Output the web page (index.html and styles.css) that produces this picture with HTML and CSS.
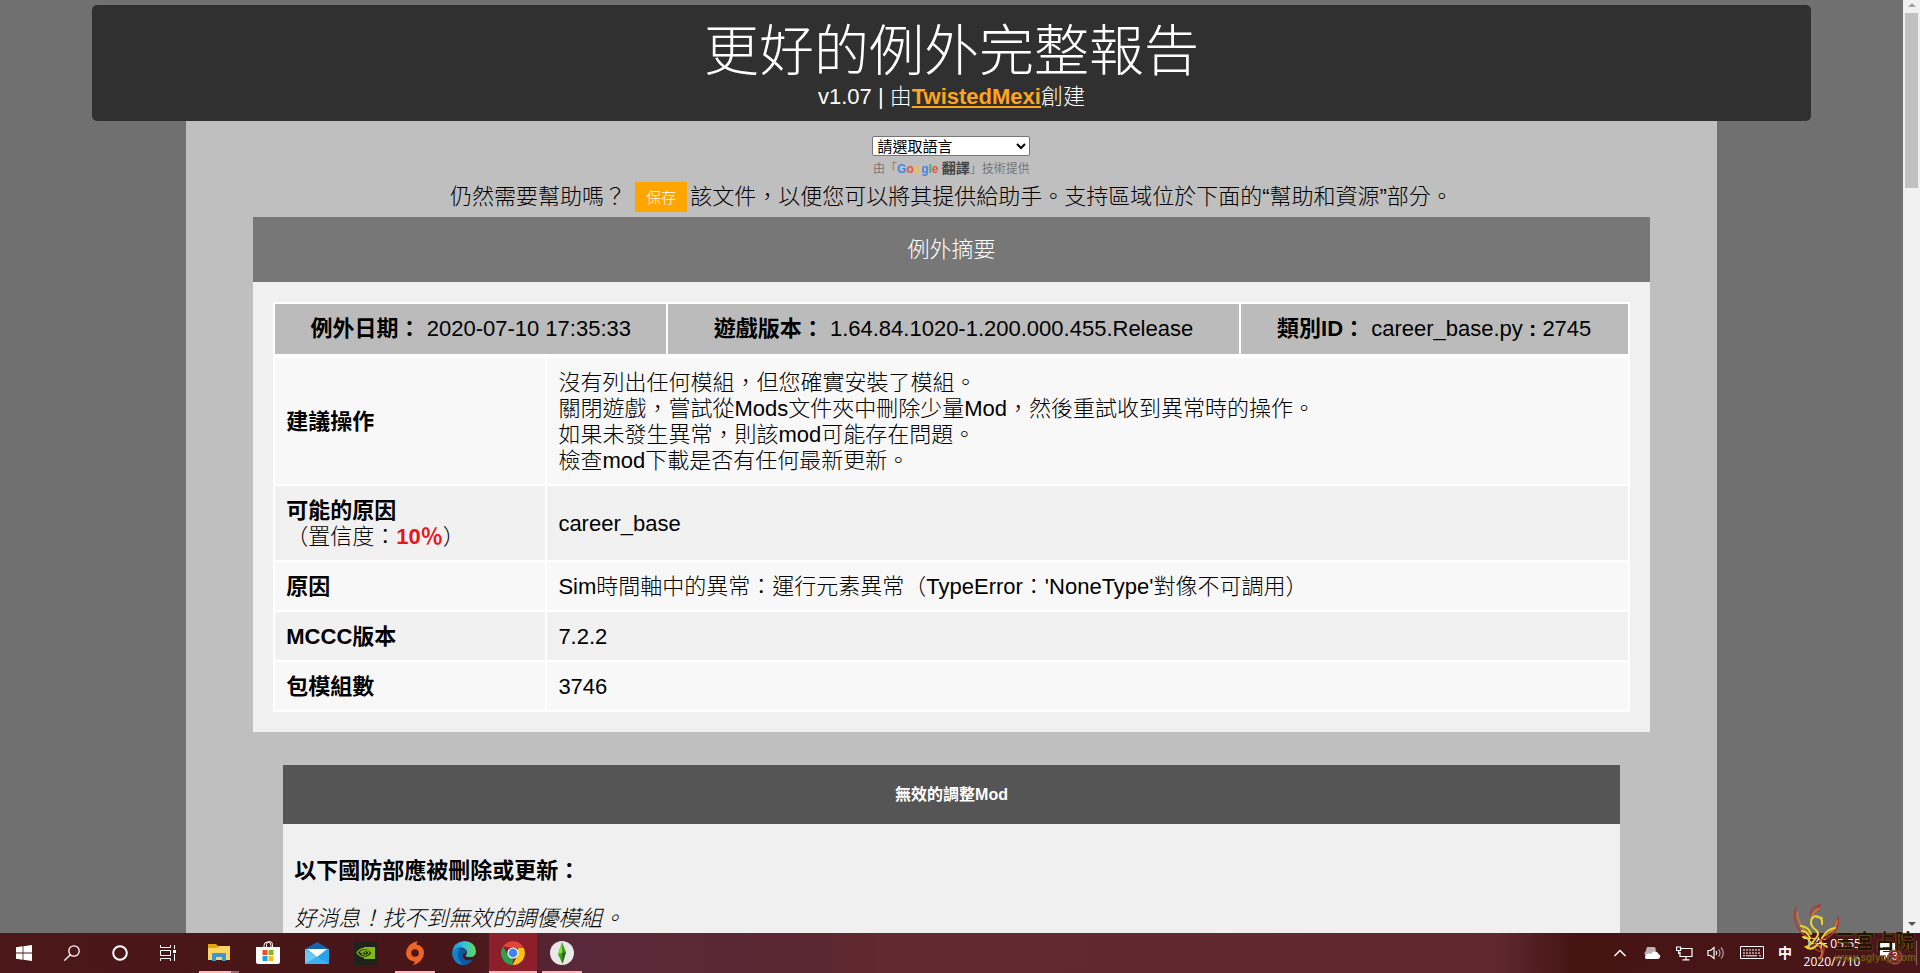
FILE: index.html
```html
<!DOCTYPE html>
<html lang="zh-TW">
<head>
    <meta charset="UTF-8">
    <meta name="viewport" content="width=device-width, initial-scale=1.0">
    <title>更好的例外完整報告</title>
    <link rel="stylesheet" href="styles.css">
</head>
<body>
    <div class="window">
        <div class="page">
            <header class="banner">
                <h1>更好的例外完整報告</h1>
                <p>v1.07 | 由<a href="#">TwistedMexi</a>創建</p>
            </header>

            <main class="content">
                <div class="translate">
                    <select aria-label="請選取語言">
                        <option>請選取語言</option>
                    </select>
                    <div class="credit">由「<span class="google"><span class="g-blue">G</span><span class="g-red">o</span><span class="g-yellow">o</span><span class="g-blue">g</span><span class="g-green">l</span><span class="g-red">e</span> <b>翻譯</b></span>」技術提供</div>
                </div>

                <p class="help">仍然需要幫助嗎？ <button type="button">保存</button>該文件，以便您可以將其提供給助手。支持區域位於下面的“幫助和資源”部分。</p>

                <section class="summary">
                    <h2>例外摘要</h2>
                    <div class="summary-body">
                        <table class="info">
                            <tr>
                                <td class="date"><b>例外日期：</b> 2020-07-10 17:35:33</td>
                                <td><b>遊戲版本：</b> 1.64.84.1020-1.200.000.455.Release</td>
                                <td class="category"><b>類別ID：</b> career_base.py<b> : </b>2745</td>
                            </tr>
                        </table>
                        <table class="details">
                            <tr>
                                <th>建議操作</th>
                                <td>沒有列出任何模組，但您確實安裝了模組。<br>關閉遊戲，嘗試從Mods文件夾中刪除少量Mod，然後重試收到異常時的操作。<br>如果未發生異常，則該mod可能存在問題。<br>檢查mod下載是否有任何最新更新。</td>
                            </tr>
                            <tr>
                                <th>可能的原因<br><span class="confidence">（置信度：<b>10％</b>）</span></th>
                                <td>career_base</td>
                            </tr>
                            <tr>
                                <th>原因</th>
                                <td>Sim時間軸中的異常：運行元素異常（TypeError：'NoneType'對像不可調用）</td>
                            </tr>
                            <tr>
                                <th>MCCC版本</th>
                                <td>7.2.2</td>
                            </tr>
                            <tr>
                                <th>包模組數</th>
                                <td>3746</td>
                            </tr>
                        </table>
                    </div>
                </section>

                <section class="mods">
                    <h3>無效的調整Mod</h3>
                    <div class="mods-body">
                        <p><b>以下國防部應被刪除或更新：</b></p>
                        <p><i>好消息！找不到無效的調優模組。</i></p>
                    </div>
                </section>
            </main>
        </div>

        <div class="scrollbar">
            <span class="arrow up"></span>
            <span class="thumb"></span>
            <span class="arrow down"></span>
        </div>
    </div>

    <footer class="taskbar">
        <div class="system">
            <div class="slot">
                <svg width="16" height="16" viewBox="0 0 16 16" fill="#fff"><path d="M0 2.2 6.6 1.3v6.3H0zM7.4 1.2 16 0v7.6H7.4zM0 8.4h6.6v6.3L0 13.8zM7.4 8.4H16V16l-8.6-1.2z"/></svg>
            </div>
            <div class="slot">
                <svg width="16" height="16" viewBox="0 0 16 16" fill="none" stroke="#fff" stroke-width="1.3"><circle cx="10" cy="6" r="5.2"/><path d="M6.3 9.7.4 15.6"/></svg>
            </div>
            <div class="slot">
                <svg width="16" height="16" viewBox="0 0 16 16" fill="none" stroke="#fff" stroke-width="2"><circle cx="8" cy="8" r="6.8"/></svg>
            </div>
            <div class="slot">
                <svg width="16" height="16" viewBox="0 0 16 16" fill="none" stroke="#fff"><path d="M.5 0v2.5h10V0M.5 16v-2.5h10V16M.5 5.500h10v5H.5zM14.500 0v4M14.500 9v7"/><path fill="#fff" stroke="none" d="M13 5h3v3h-3z"/></svg>
            </div>
        </div>
        <div class="apps">
            <div class="slot open stacked">
                <svg width="22" height="20" viewBox="0 0 22 20"><path fill="#e5a50f" d="M0 1h8l2 2h12v4H0z"/><path fill="#fcd462" d="M0 5h9l2-2h11v14H0z"/><path fill="#3f94d2" d="M4 18v-7q0-1 1-1h12q1 0 1 1v7h-4v-4H8v4z"/></svg>
            </div>
            <div class="slot">
                <svg width="24" height="24" viewBox="0 0 24 24"><path d="M8 7V4.500a3.500 3.500 0 0 1 7 0V7M10.500 7V3.500a3 3 0 0 1 6 0V7" fill="none" stroke="#fff"/><path fill="#fff" d="M0 6h24v15q0 2-2 2H2q-2 0-2-2z"/><path fill="#e8502a" d="M6.500 9H11.500v5h-5z"/><path fill="#7db82a" d="M12.500 9h5v5h-5z"/><path fill="#1d9fe0" d="M6.500 15h5v5h-5z"/><path fill="#fbb813" d="M12.500 15h5v5h-5z"/></svg>
            </div>
            <div class="slot">
                <svg width="24" height="24" viewBox="0 0 24 24"><path fill="#1464b4" d="M0 8 12 1l12 7v15H0z"/><path fill="#2aa1e8" d="M0 8h24v15H0z"/><path fill="#fff" d="M2 8h20l-10 8z"/><path fill="#6cc8f5" d="M0 8l12 8-12 7z"/><path fill="#3fb2ee" d="M0 23 12 16l12 7z"/></svg>
            </div>
            <div class="slot">
                <svg width="24" height="24" viewBox="0 0 24 24"><path fill="#20231b" d="M0 0h24v24H0z"/><path fill="#83b81a" d="M10 6h11v12H10z"/><path fill="#20231b" stroke="#83b81a" stroke-width="1.200" d="M3 11.500Q7.500 6 13 8q3 1.500 5 4-4 5-8.500 4T3 11.500z"/><path fill="none" stroke="#83b81a" stroke-width="1.200" d="M6 11.500q3-3.500 6.500-2 2 1 2.500 2.500-2 2.500-4.500 2T8 11.500q2-2 4 .3"/></svg>
            </div>
            <div class="slot open">
                <svg width="24" height="24" viewBox="0 0 24 24"><path fill="#eb6526" fill-rule="evenodd" d="M15 0q-2 2.500-1.500 3.500Q21 5 21 12q0 4-3.500 8-3.500 3.200-7.500 4 2-2.500 1.500-3.500Q3 19 3 12q0-4 3.500-8Q10 .8 15 0zM12 8.200a3.800 3.800 0 1 0 0 7.600 3.800 3.800 0 0 0 0-7.600z"/></svg>
            </div>
            <div class="slot">
                <svg width="24" height="24" viewBox="0 0 24 24"><defs><linearGradient id="edge" x1="0" x2="1"><stop offset="0" stop-color="#1d91d8"/><stop offset=".5" stop-color="#2fc2df"/><stop offset="1" stop-color="#66d84e"/></linearGradient></defs><path fill="#0c59a4" d="M0 12q3-6 9-5 5 1 5 5-4 0-3 4 2 5 10 2.500Q17 24 11 24 1 23 0 12z"/><path fill="#1680c7" d="M0 12q3-6 8-4-3 3-2 8 1 5 6 8Q2 24 0 12z"/><path fill="url(#edge)" d="M0 12Q1 1 12 0q11 .5 12 10 0 6-6 6-4 0-4.500-1.500Q16 12 14.500 9.500 12 6 8 6.500 3 7 0 12z"/></svg>
            </div>
            <div class="slot open active">
                <svg width="24" height="24" viewBox="0 0 24 24"><path fill="#e24435" d="M2 5.500A12 12 0 0 1 22.800 7H12z"/><path fill="#fbc117" d="M22.800 7A12 12 0 0 1 11.500 24l5-9.500L17 7z"/><path fill="#2ea04e" d="M2 5.500 7.500 15l4.500 2.500L11.500 24A12 12 0 0 1 2 5.500z"/><circle cx="12" cy="12" r="5.600" fill="#fff"/><circle cx="12" cy="12" r="4.400" fill="#4483ee"/></svg>
            </div>
            <div class="slot open">
                <svg width="24" height="24" viewBox="0 0 24 24"><circle cx="12" cy="12" r="12" fill="#e9e7e7"/><path fill="#3f9f22" d="M12 1l4 10-3.500 12L8 13z"/><path fill="#8edb3c" d="M12 1v11l-4 1z"/><path fill="#256e17" d="M12 12l4-1-3.500 12z"/></svg>
            </div>
        </div>

        <div class="tray">
            <div class="tray-icon">
                <svg width="14" height="10" viewBox="0 0 14 10" fill="none" stroke="#fff" stroke-width="1.500"><path d="M1.500 8 7 2.500 12.500 8"/></svg>
            </div>
            <div class="tray-icon">
                <svg width="18" height="12" viewBox="0 0 18 12"><path fill="#bdb1b2" d="M2 8a3 3 0 0 1 1-4A5 5 0 0 1 13 3L8 9z"/><path fill="#fff" d="M3 12a3 3 0 0 1 1-5q2-1 4 0 2-3.500 5-2.500 2 .5 2.500 2.500A2.600 2.600 0 0 1 15 12z"/></svg>
            </div>
            <div class="tray-icon">
                <svg width="17" height="15" viewBox="0 0 17 15" fill="none" stroke="#fff" stroke-width="1.200"><path d="M5 2.500h11v8H4V6M10 10.500v3M6.500 13.800h7M.6 1h4v3.500h-4zM2.600 4.500V8"/></svg>
            </div>
            <div class="tray-icon">
                <svg width="18" height="14" viewBox="0 0 18 14" fill="none" stroke="#fff" stroke-width="1.200"><path d="M1 4.500h2.500L7 1.500v11L3.500 9.500H1zM9 5q1.500 2 0 4"/><path stroke="#b99fa1" d="M11.500 3.500q3 3.500 0 7M14 1.500q4.500 5.500 0 11"/></svg>
            </div>
            <div class="tray-icon keyboard">
                <svg width="24" height="14" viewBox="0 0 24 14" fill="none" stroke="#fff"><path d="M.5.500h23v12H.5z"/><path stroke-dasharray="2 1" d="M3 4h18M3 7h18"/><path d="M3 9.800h2M6 9.800h11M19 9.800h2"/></svg>
            </div>
            <span class="ime">中</span>
            <div class="clock"><span>下午 05:55</span><span>2020/7/10</span></div>
            <div class="notice">
                <svg width="24" height="24" viewBox="0 0 24 24"><path fill="#fff" d="M1 2h15v13H9l-4 4v-4H1z"/><path stroke="#4b1618" d="M4 6.500h9M4 10.500h9"/><circle cx="16" cy="16" r="7" fill="#7c2228" stroke="#c7595e"/></svg>
                <span>3</span>
            </div>
        </div>
    </footer>

    <!-- site watermark, lies over the taskbar corner -->
    <div class="watermark">
        <svg width="48" height="60" viewBox="0 0 48 60" fill="none" stroke-linecap="round">
            <path stroke="#b3382c" stroke-width="1.500" d="M3 4Q-1 17 7 27q5 6 12 7M45 13q2 12-7 18-5 5-10 4M17 10q2-7 10-9-3 3-1 6M27 36q8 7 0 20M17 38q3 8 12 10"/>
            <path stroke="#de7424" stroke-width="1.500" d="M4 8q1 14 12 22M44 17q-1 9-12 15M19 12q3-6 7-7M22 39q11 6 5 15"/>
            <path stroke="#e8d52a" stroke-width="2" d="M29 20q1-7-6-8-5 1-5 6 0 5 5 8 4 4 0 8M24 13l5 1M8 22q8 1 10 8M9 27q5 0 8 7M10 33q5 0 7 5M42 24q-8 1-13 10M23 34q-6 8-10 9 5 4 11-2M27 38l7 5"/>
        </svg>
        <div class="watermark-text"><b>三宮占院</b><span>www.sglynp.com</span></div>
    </div>
</body>
</html>
```
FILE: styles.css
```css
* {
    box-sizing: border-box;
}
body {
    margin: 0;
    height: 100vh;
    display: flex;
    flex-direction: column;
    overflow: hidden;
    font-family: "Liberation Sans", Arial, "Noto Sans CJK TC", sans-serif;
    font-size: 22px;
    line-height: 26px;
    color: #000;
}
h1, h2, h3, p {
    margin: 0;
    font-weight: 300;
}
b {
    font-weight: bold;
}

/* page */
.window {
    flex: 1;
    min-height: 0;
    display: flex;
    background-color: #707070;
}
.page {
    flex: 1;
    padding-top: 5px;
    overflow: hidden;
    font-weight: 300;
}
.banner {
    width: calc(90% + 6px);
    margin: 0 auto;
    padding: 13px 0 11px;
    border-radius: 5px;
    background-color: #303030;
    color: #fff;
    text-align: center;
}
.banner h1 {
    font-size: 55px;
    line-height: 66px;
}
.banner a {
    color: #ffa51c;
    font-weight: bold;
}
.content {
    width: calc(80% + 8px);
    margin: 0 auto;
    padding: 15px 67px 0;
    background-color: #bfbfbf;
}
.translate {
    width: 158px;
    margin: 0 auto;
}
.translate select {
    display: block;
    width: 100%;
    height: 20px;
    padding: 0;
    border: 1px solid #767676;
    border-radius: 2px;
    background-color: #fff;
    font-family: inherit;
    font-size: 15px;
    color: #000;
}
.credit {
    padding-top: 3px;
    font-size: 12px;
    line-height: 18px;
    color: #555;
    white-space: nowrap;
    text-align: center;
}
.google b {
    font-size: 14px;
    color: #444;
}
.g-blue {
    color: #4a86e8;
    font-weight: bold;
}
.g-red {
    color: #e2564b;
    font-weight: bold;
}
.g-yellow {
    color: #f2be42;
    font-weight: bold;
}
.g-green {
    color: #4ba860;
    font-weight: bold;
}
.help {
    display: flex;
    align-items: center;
    justify-content: center;
    gap: 3px;
    height: 39px;
    padding-bottom: 2px;
    white-space: pre;
}
.help button {
    width: 52px;
    height: 30px;
    padding: 0;
    border: none;
    background-color: #ffa500;
    color: #fff;
    font-family: inherit;
    font-size: 15px;
    font-weight: 300;
    cursor: pointer;
}

/* summary */
.summary h2 {
    padding: 20px 0 19px;
    background-color: #777;
    color: #fff;
    font-size: 22px;
    text-align: center;
}
.summary-body {
    padding: 20px;
    background-color: #f0f0f0;
}
table {
    width: 100%;
    border-collapse: separate;
    border-spacing: 2px;
    table-layout: fixed;
    background-color: #fff;
}
.info td {
    height: 50px;
    padding: 0;
    background-color: #bbb;
    text-align: center;
    white-space: nowrap;
}
.info .date {
    width: 29%;
}
.info .category {
    width: 387px;
}
.details th,
.details td {
    padding: 12px 11px 10px;
    text-align: left;
    background-color: #f8f8f8;
}
.details th {
    width: 20%;
}
.details tr:nth-child(even) th,
.details tr:nth-child(even) td {
    background-color: #f1f1f1;
}
.confidence {
    font-weight: 300;
}
.confidence b {
    color: #e8151b;
}

/* mods */
.mods {
    margin: 33px 30px 0;
}
.mods h3 {
    padding: 17px 0 16px;
    background-color: #555;
    color: #fff;
    font-size: 16px;
    font-weight: bold;
    text-align: center;
}
.mods-body {
    padding: 34px 11px;
    background-color: #f0f0f0;
}
.mods-body p {
    margin-bottom: 22px;
}

/* scrollbar */
.scrollbar {
    width: 17px;
    display: flex;
    flex-direction: column;
    align-items: center;
    background-color: #f1f1f1;
}
.arrow {
    border: 4px solid transparent;
}
.arrow.up {
    margin-bottom: 6px;
    border-top: 0;
    margin-top: 3px;
    border-bottom-color: #a3a3a3;
}
.arrow.down {
    margin-top: auto;
    margin-bottom: 7px;
    border-bottom: 0;
    border-top-color: #505050;
}
.thumb {
    width: 13px;
    height: 175px;
    background-color: #c1c1c1;
}

/* taskbar */
.taskbar {
    height: 40px;
    display: flex;
    background: linear-gradient(to right, #4b1718 0%, #481618 24%, #59283a 30%, #5b2731 43%, #632a2e 46%, #5f292e 78%, #451413 82%, #4b1619 100%);
    color: #fff;
}
.system,
.apps {
    display: flex;
}
.apps {
    gap: 1px;
    padding-left: 3px;
}
.slot {
    position: relative;
    width: 48px;
    display: flex;
    align-items: center;
    justify-content: center;
}
.slot.open::after {
    content: "";
    position: absolute;
    bottom: 0;
    left: 4px;
    right: 4px;
    height: 2px;
    background-color: #ffb4b9;
}
.slot.stacked::after {
    background: linear-gradient(to right, #ffb4b9 80%, #9c6a70 80%);
}
.slot.active {
    background-color: #8c1f29;
}
.slot.active::after {
    left: 0;
    right: 0;
}
.tray {
    margin-left: auto;
    display: flex;
    align-items: center;
}
.tray-icon {
    width: 32px;
    display: flex;
    justify-content: center;
}
.tray-icon.keyboard {
    width: 40px;
}
.ime {
    width: 26px;
    font-size: 14px;
    font-weight: bold;
    text-align: center;
}
.clock {
    width: 68px;
    display: flex;
    flex-direction: column;
    align-items: center;
    font-family: "Open Sans", "Noto Sans CJK TC", sans-serif;
    font-size: 12px;
    line-height: 18px;
}
.notice {
    position: relative;
    width: 51px;
    height: 24px;
    padding-left: 13px;
    margin-right: 3px;
    border-right: 1px solid #8a6062;
}
.notice svg {
    display: block;
}
.notice span {
    position: absolute;
    left: 26px;
    top: 8px;
    font-size: 10px;
    line-height: 16px;
}
.watermark {
    position: absolute;
    right: 4px;
    bottom: 9px;
    display: flex;
    align-items: flex-end;
    pointer-events: none;
}
.watermark-text {
    display: flex;
    flex-direction: column;
    margin-left: -6px;
    font-family: "Liberation Sans", "Noto Sans CJK TC", sans-serif;
    color: #1d1402;
    text-shadow: 0 0 1px #c9a227;
}
.watermark-text b {
    font-family: "Liberation Serif", "Noto Sans CJK TC", serif;
    font-size: 20px;
    line-height: 20px;
}
.watermark-text span {
    font-size: 10px;
    font-weight: bold;
    line-height: 12px;
    color: #6d5a12;
    text-shadow: none;
}
```
